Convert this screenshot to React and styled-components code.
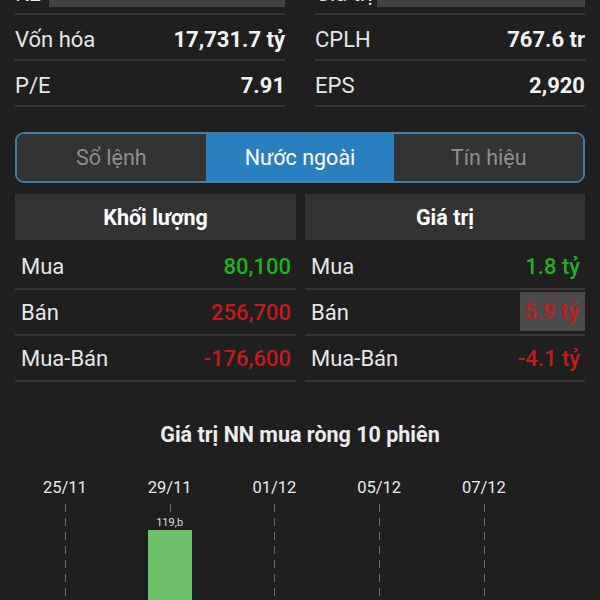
import React from "react";
import styled, { createGlobalStyle } from "styled-components";

const Global = createGlobalStyle`
  html, body { margin: 0; padding: 0; background: #1f1f1f; }
  body { font-family: Roboto, "Noto Sans", sans-serif; color: #ececec; overflow: hidden; }
`;

const Page = styled.div`
  width: 600px;
  height: 600px;
  overflow: hidden;
  background: #1f1f1f;
  padding: 0 15px;
  box-sizing: border-box;
`;

const InfoGrid = styled.div`
  margin-top: -31px;
  display: grid;
  grid-template-columns: 1fr 1fr;
  column-gap: 30px;
`;

const InfoRow = styled.div`
  height: 46px;
  box-sizing: border-box;
  padding-top: 5px;
  display: flex;
  align-items: center;
  justify-content: space-between;
  border-bottom: 2px solid #363636;
  font-size: 22px;
`;

const Label = styled.span`
  color: #e6e6e6;
  white-space: nowrap;
`;

const Value = styled.span`
  font-weight: 700;
  color: #f2f2f2;
  white-space: nowrap;
  ${(p) => p.$shade && `flex: 1; text-align: right; background: #424242; margin-left: ${p.$shade}px; height: 38px; line-height: 38px; align-self: flex-start; margin-top: -5px;`}
`;

const Tabs = styled.div`
  margin-top: 25px;
  height: 51px;
  box-sizing: border-box;
  border: 2px solid #3f7fa9;
  border-radius: 9px;
  overflow: hidden;
  display: grid;
  grid-template-columns: 1fr 1fr 1fr;
`;

const Tab = styled.div`
  display: flex;
  align-items: center;
  justify-content: center;
  font-size: 21.5px;
  background: ${(p) => (p.$active ? "#2a80bf" : "#333333")};
  color: ${(p) => (p.$active ? "#ffffff" : "#8e8e8e")};
`;

const Tables = styled.div`
  margin-top: 11px;
  display: grid;
  grid-template-columns: 281px 280px;
  column-gap: 9px;
`;

const Column = styled.div`
  display: flex;
  flex-direction: column;
`;

const Header = styled.div`
  height: 46px;
  background: #333333;
  display: flex;
  align-items: center;
  justify-content: center;
  font-size: 21.5px;
  font-weight: 700;
  color: #ffffff;
  margin-bottom: 4px;
`;

const DataRow = styled.div`
  height: 46px;
  box-sizing: border-box;
  display: flex;
  align-items: center;
  justify-content: space-between;
  border-bottom: 2px solid #363636;
  padding: 0 5px 0 6px;
  font-size: 22px;
`;

const Num = styled.span`
  color: ${(p) => p.$color};
  font-weight: 500;
  white-space: nowrap;
  ${(p) => p.$hl && `background: #4a4a4a; height: 39px; line-height: 39px; padding: 0 6px 0 4px; margin-right: -5px; align-self: flex-start; margin-top: 2px;`}
`;

const ChartTitle = styled.div`
  margin-top: 40px;
  text-align: center;
  font-size: 21.5px;
  font-weight: 700;
  color: #ececec;
`;

const Chart = styled.div`
  margin-top: 31px;
  margin-left: -2.5px;
  display: flex;
  height: 200px;
`;

const Slot = styled.div`
  width: 104.75px;
  display: flex;
  flex-direction: column;
  align-items: center;
`;

const DateLabel = styled.div`
  font-size: 16.5px;
  color: #e8e8e8;
  height: 20px;
  line-height: 20px;
`;

const Track = styled.div`
  position: relative;
  margin-top: 6px;
  flex: 1;
  width: 100%;
  display: flex;
  flex-direction: column;
  align-items: center;
  &::before {
    content: "";
    position: absolute;
    top: 0;
    bottom: 0;
    left: 50%;
    width: 1px;
    background: repeating-linear-gradient(to bottom, #6c6c6c 0 8px, transparent 8px 14px);
  }
`;

const BarLabel = styled.div`
  position: relative;
  margin-top: 12px;
  font-size: 11px;
  color: #dddddd;
  line-height: 13px;
  background: #1f1f1f;
  padding: 0 1px;
`;

const Bar = styled.div`
  position: relative;
  margin-top: 1px;
  width: 44px;
  flex: 1;
  background: #6cc16a;
`;

const GREEN = "#20b020";
const RED = "#c41a1a";

export default function App() {
  const dates = ["25/11", "29/11", "01/12", "05/12", "07/12"];
  return (
    <>
      <Global />
      <Page>
        <InfoGrid>
          <InfoRow>
            <Label>KL</Label>
            <Value $shade={8}>6,026,700</Value>
          </InfoRow>
          <InfoRow>
            <Label>Giá trị</Label>
            <Value $shade={4}>102.7 tỷ</Value>
          </InfoRow>
          <InfoRow>
            <Label>Vốn hóa</Label>
            <Value>17,731.7 tỷ</Value>
          </InfoRow>
          <InfoRow>
            <Label>CPLH</Label>
            <Value>767.6 tr</Value>
          </InfoRow>
          <InfoRow>
            <Label>P/E</Label>
            <Value>7.91</Value>
          </InfoRow>
          <InfoRow>
            <Label>EPS</Label>
            <Value>2,920</Value>
          </InfoRow>
        </InfoGrid>

        <Tabs>
          <Tab>Sổ lệnh</Tab>
          <Tab $active>Nước ngoài</Tab>
          <Tab>Tín hiệu</Tab>
        </Tabs>

        <Tables>
          <Column>
            <Header>Khối lượng</Header>
            <DataRow>
              <Label>Mua</Label>
              <Num $color={GREEN}>80,100</Num>
            </DataRow>
            <DataRow>
              <Label>Bán</Label>
              <Num $color={RED}>256,700</Num>
            </DataRow>
            <DataRow>
              <Label>Mua-Bán</Label>
              <Num $color={RED}>-176,600</Num>
            </DataRow>
          </Column>
          <Column>
            <Header>Giá trị</Header>
            <DataRow>
              <Label>Mua</Label>
              <Num $color={GREEN}>1.8 tỷ</Num>
            </DataRow>
            <DataRow>
              <Label>Bán</Label>
              <Num $color={RED} $hl>5.9 tỷ</Num>
            </DataRow>
            <DataRow>
              <Label>Mua-Bán</Label>
              <Num $color={RED}>-4.1 tỷ</Num>
            </DataRow>
          </Column>
        </Tables>

        <ChartTitle>Giá trị NN mua ròng 10 phiên</ChartTitle>

        <Chart>
          {dates.map((d, i) => (
            <Slot key={d}>
              <DateLabel>{d}</DateLabel>
              <Track>
                {i === 1 && (
                  <>
                    <BarLabel>119,b</BarLabel>
                    <Bar />
                  </>
                )}
              </Track>
            </Slot>
          ))}
        </Chart>
      </Page>
    </>
  );
}
